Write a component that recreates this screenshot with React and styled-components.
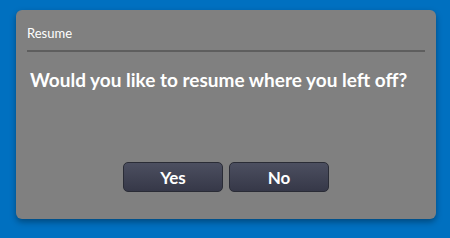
import React from "react";
import styled, { createGlobalStyle } from "styled-components";

const GlobalStyle = createGlobalStyle`
  html, body {
    margin: 0;
    padding: 0;
    background: #0070c0;
    font-family: Lato, "Liberation Sans", sans-serif;
  }
`;

const Page = styled.div`
  width: 450px;
  height: 238px;
  box-sizing: border-box;
  padding: 10px 14px 0 16px;
`;

const Dialog = styled.div`
  width: 420px;
  height: 209px;
  box-sizing: border-box;
  background: #808080;
  border-radius: 6px;
  box-shadow: 0 3px 6px rgba(0, 0, 0, 0.35);
  padding: 0 11px;
  display: flex;
  flex-direction: column;
`;

const Header = styled.div`
  color: #ffffff;
  font-size: 13px;
  padding: 15px 0 9px;
  border-bottom: 2px solid #5e5e5e;
`;

const Question = styled.div`
  color: #ffffff;
  font-size: 19px;
  font-weight: 700;
  margin: 16px 0 0 3px;
`;

const Buttons = styled.div`
  display: flex;
  justify-content: center;
  gap: 6px;
  margin-top: auto;
  margin-bottom: 27px;
`;

const Button = styled.button`
  width: 100px;
  height: 30px;
  border: 1px solid #2a2c36;
  border-radius: 5px;
  background: linear-gradient(#4c4f60, #363848);
  color: #ffffff;
  font-family: Lato, "Liberation Sans", sans-serif;
  font-size: 17px;
  font-weight: 700;
  cursor: pointer;
`;

export default function App() {
  return (
    <>
      <GlobalStyle />
      <Page>
        <Dialog>
          <Header>Resume</Header>
          <Question>Would you like to resume where you left off?</Question>
          <Buttons>
            <Button>Yes</Button>
            <Button>No</Button>
          </Buttons>
        </Dialog>
      </Page>
    </>
  );
}
